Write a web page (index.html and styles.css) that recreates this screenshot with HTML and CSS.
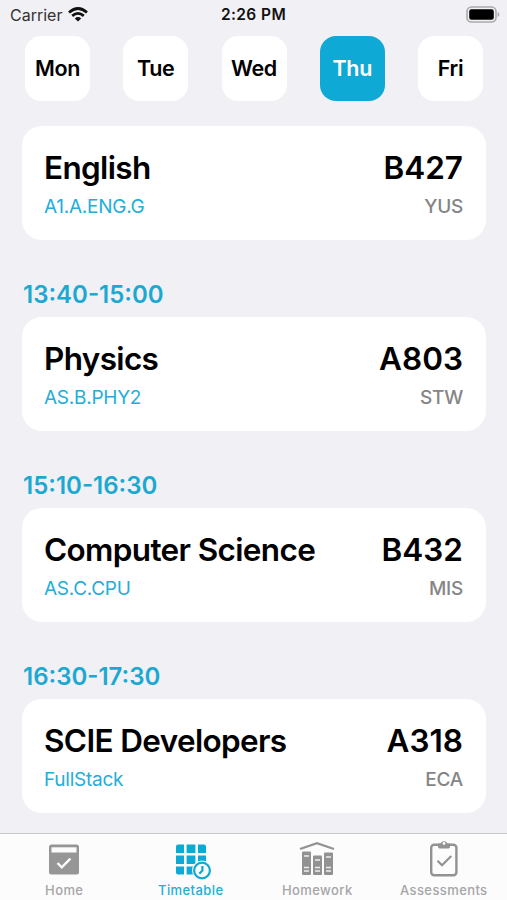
FILE: index.html
```html
<!DOCTYPE html>
<html lang="en">
<head>
  <meta charset="UTF-8" />
  <meta name="viewport" content="width=device-width, initial-scale=1.0"/>
  <title>Timetable</title>
  <link rel="stylesheet" href="styles.css">
</head>
<body>
  <div class="app">
    <header class="status">
      <div class="carrier">
        <span>Carrier</span>
        <svg class="wifi" viewBox="0 0 20 15" width="20" height="15">
          <g fill="none" stroke="#111" stroke-width="2.7">
            <path d="M1 5.4Q10-2.4 19 5.4"/>
            <path d="M4.2 8.9Q10 4 15.8 8.9"/>
          </g>
          <path d="M6.8 11.4Q10 8.8 13.2 11.4L10 14.6Z" fill="#111"/>
        </svg>
      </div>
      <div class="clock">2:26 PM</div>
      <div class="power">
        <svg viewBox="0 0 34 17" width="34" height="17">
          <rect x="1" y="1" width="29" height="15" rx="4.5" fill="none" stroke="#aaaaae" stroke-width="1.6"/>
          <rect x="3.2" y="3.2" width="24.6" height="10.6" rx="2.2" fill="#000"/>
          <path d="M31.6 6Q33.4 6.6 33.4 8.5T31.6 11Z" fill="#aaaaae"/>
        </svg>
      </div>
    </header>

    <nav class="days">
      <button class="day">Mon</button>
      <button class="day">Tue</button>
      <button class="day">Wed</button>
      <button class="day active">Thu</button>
      <button class="day">Fri</button>
    </nav>

    <main class="lessons">
      <div class="card">
        <div class="row"><span class="subject">English</span><span class="room">B427</span></div>
        <div class="row"><span class="code">A1.A.ENG.G</span><span class="teacher">YUS</span></div>
      </div>

      <div class="time">13:40-15:00</div>
      <div class="card">
        <div class="row"><span class="subject">Physics</span><span class="room">A803</span></div>
        <div class="row"><span class="code">AS.B.PHY2</span><span class="teacher">STW</span></div>
      </div>

      <div class="time">15:10-16:30</div>
      <div class="card">
        <div class="row"><span class="subject">Computer Science</span><span class="room">B432</span></div>
        <div class="row"><span class="code">AS.C.CPU</span><span class="teacher">MIS</span></div>
      </div>

      <div class="time">16:30-17:30</div>
      <div class="card">
        <div class="row"><span class="subject">SCIE Developers</span><span class="room">A318</span></div>
        <div class="row"><span class="code">FullStack</span><span class="teacher">ECA</span></div>
      </div>
    </main>

    <nav class="tabs">
      <div class="tab">
        <svg viewBox="0 0 40 42" width="40" height="42">
          <rect x="5" y="5.5" width="30" height="30" rx="2.5" fill="#969696"/>
          <rect x="7.5" y="8.3" width="25" height="5.2" fill="#fcfcfc"/>
          <path d="M13.5 24L17.8 28.3L26.4 19.7" fill="none" stroke="#fcfcfc" stroke-width="2.4"/>
        </svg>
        <span>Home</span>
      </div>
      <div class="tab active">
        <svg viewBox="0 0 40 42" width="40" height="42">
          <g fill="#0fa9d6">
            <path d="M7 5.5h6v8.6H5V7.5a2 2 0 0 1 2-2zM15.6 5.5h8.8v8.6h-8.8zM27 5.5h6a2 2 0 0 1 2 2v6.6h-8z"/>
            <path d="M5 16.5h8v8.6H5zM15.6 16.5h8.8v8.6h-8.8zM27 16.5h8v8.6h-8z"/>
            <path d="M5 27.5h8v8H7a2 2 0 0 1-2-2zM15.6 27.5h8.8v8h-8.8z"/>
          </g>
          <circle cx="31" cy="31.5" r="10" fill="#fcfcfc"/>
          <circle cx="31" cy="31.5" r="7.9" fill="#fcfcfc" stroke="#0fa9d6" stroke-width="2.2"/>
          <path d="M31.4 27V31.5L28.3 34.7" fill="none" stroke="#0fa9d6" stroke-width="2.2"/>
        </svg>
        <span>Timetable</span>
      </div>
      <div class="tab">
        <svg viewBox="0 0 40 42" width="40" height="42">
          <path d="M3 10L20 4.2L37 10" fill="none" stroke="#929292" stroke-width="2.3"/>
          <g fill="#929292">
            <rect x="5" y="12.5" width="9" height="23.5" rx="1"/>
            <rect x="16" y="16.5" width="9" height="19.5" rx="1"/>
            <rect x="27" y="13.5" width="9" height="22.5" rx="1"/>
          </g>
          <path d="M7 17h5M7 28.5h5M7 32h5M18 21h5M18 28.5h5M18 32h5M29 18h5M29 28.5h5M29 32h5" stroke="#eee" stroke-width="1.3"/>
        </svg>
        <span>Homework</span>
      </div>
      <div class="tab">
        <svg viewBox="0 0 40 42" width="40" height="42">
          <rect x="7.2" y="5.7" width="25.2" height="30.5" rx="3" fill="none" stroke="#929292" stroke-width="2.4"/>
          <path d="M14 4.6h2.6a3.6 3.6 0 0 1 6.8 0H26v3.2a1.6 1.6 0 0 1-1.6 1.6h-8.8A1.6 1.6 0 0 1 14 7.8z" fill="#929292"/>
          <circle cx="20" cy="4.5" r="1.4" fill="#fcfcfc"/>
          <path d="M13.5 21.8L18 26.2L27.3 17" fill="none" stroke="#929292" stroke-width="2.2"/>
        </svg>
        <span>Assessments</span>
      </div>
    </nav>
  </div>
</body>
</html>
```
FILE: styles.css
```css
* {
  box-sizing: border-box;
}
body {
  margin: 0;
  background: #f1f0f5;
  font-family: Inter, 'Liberation Sans', sans-serif;
  color: #000;
}
.app {
  height: 900px;
  display: flex;
  flex-direction: column;
  overflow: hidden;
}
/* Status bar */
.status {
  height: 36px;
  padding: 5px 8px 0 8px;
  display: grid;
  grid-template-columns: 1fr auto 1fr;
  font-size: 16px;
  line-height: 20px;
  color: #111;
}
.carrier {
  display: flex;
  gap: 6px;
  padding-left: 2px;
  color: #333;
}
.wifi {
  margin-top: 2px;
}
.clock {
  font-weight: 600;
  font-size: 15.5px;
  letter-spacing: 0.4px;
}
.power {
  display: flex;
  justify-content: flex-end;
  padding-top: 1px;
  margin-right: -1px;
}
/* Day picker */
.days {
  display: flex;
  justify-content: space-between;
  padding: 0 24px 0 25px;
  height: 65px;
}
.day {
  width: 65px;
  height: 65px;
  padding: 0;
  border: none;
  border-radius: 16px;
  background: #fff;
  color: #000;
  font: 600 21.5px/65px Inter, 'Liberation Sans', sans-serif;
  letter-spacing: -0.4px;
}
.day.active {
  background: #0fa9d6;
  color: #fff;
}
/* Lessons */
.lessons {
  flex: 1;
  padding: 25px 21px 0 22px;
}
.card {
  height: 114px;
  padding: 22px 23px 0 22px;
  border-radius: 20px;
  background: #fff;
}
.row {
  display: flex;
  justify-content: space-between;
  line-height: 40px;
}
.row + .row {
  line-height: 38px;
}
.subject,
.room {
  font-size: 31.5px;
  font-weight: 600;
  letter-spacing: -0.65px;
}
.room {
  letter-spacing: 0;
}
.code,
.teacher {
  font-size: 19px;
  letter-spacing: -0.25px;
  color: #23add8;
}
.teacher {
  font-weight: 500;
  color: #858585;
}
.time {
  height: 77px;
  padding: 36px 0 0 1px;
  font-size: 24px;
  font-weight: 600;
  line-height: 38px;
  color: #1ba9d2;
}
/* Tab bar */
.tabs {
  height: 67px;
  display: flex;
  padding-left: 1px;
  background: #fcfcfd;
  border-top: 1px solid #c8c8cb;
}
.tab {
  flex: 0 0 126.5px;
  padding-top: 5px;
  display: flex;
  flex-direction: column;
  align-items: center;
  font-size: 13px;
  font-weight: 500;
  line-height: 18px;
  letter-spacing: 0.4px;
  color: #a5a5a5;
}
.tab.active {
  color: #23add8;
}
```
